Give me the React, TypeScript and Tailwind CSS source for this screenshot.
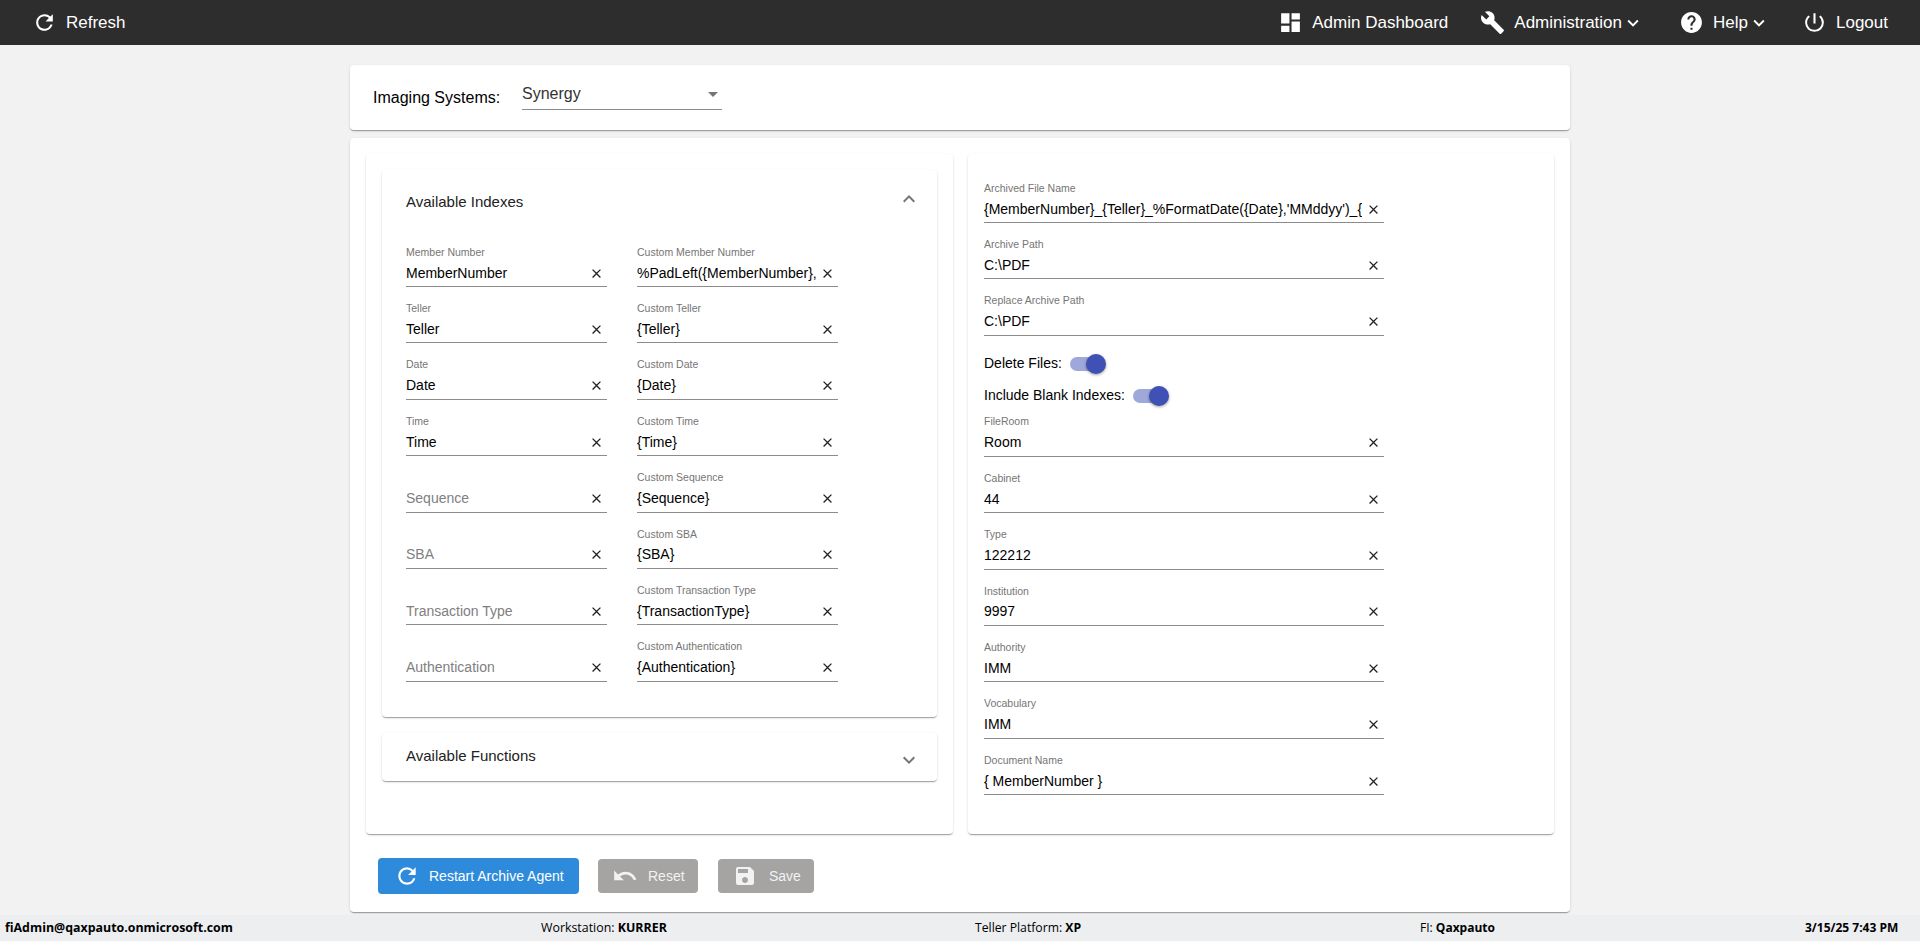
import {
  MdRefresh,
  MdDashboard,
  MdBuild,
  MdHelp,
  MdPowerSettingsNew,
  MdKeyboardArrowDown,
  MdExpandLess,
  MdExpandMore,
  MdClose,
  MdArrowDropDown,
  MdUndo,
  MdSave,
} from "react-icons/md";

const cardShadow = "shadow-[0_2px_1px_-1px_rgba(0,0,0,0.2),0_1px_1px_0_rgba(0,0,0,0.14),0_1px_3px_0_rgba(0,0,0,0.12)]";

const indexes = [
  { label: "Member Number", value: "MemberNumber", customLabel: "Custom Member Number", customValue: "%PadLeft({MemberNumber}," },
  { label: "Teller", value: "Teller", customLabel: "Custom Teller", customValue: "{Teller}" },
  { label: "Date", value: "Date", customLabel: "Custom Date", customValue: "{Date}" },
  { label: "Time", value: "Time", customLabel: "Custom Time", customValue: "{Time}" },
  { placeholder: "Sequence", customLabel: "Custom Sequence", customValue: "{Sequence}" },
  { placeholder: "SBA", customLabel: "Custom SBA", customValue: "{SBA}" },
  { placeholder: "Transaction Type", customLabel: "Custom Transaction Type", customValue: "{TransactionType}" },
  { placeholder: "Authentication", customLabel: "Custom Authentication", customValue: "{Authentication}" },
];

const archiveFields = [
  { label: "Archived File Name", value: "{MemberNumber}_{Teller}_%FormatDate({Date},'MMddyy')_{" },
  { label: "Archive Path", value: "C:\\PDF" },
  { label: "Replace Archive Path", value: "C:\\PDF" },
];

const metaFields = [
  { label: "FileRoom", value: "Room" },
  { label: "Cabinet", value: "44" },
  { label: "Type", value: "122212" },
  { label: "Institution", value: "9997" },
  { label: "Authority", value: "IMM" },
  { label: "Vocabulary", value: "IMM" },
  { label: "Document Name", value: "{ MemberNumber }" },
];

interface FieldProps {
  label?: string;
  value?: string;
  placeholder?: string;
}

function Field({ label, value, placeholder }: FieldProps) {
  return (
    <div className="h-[46px] border-b border-[#8c8c8c]">
      <div className="h-[23px] flex items-center text-[10.5px] text-[#757575]">{label}</div>
      <div className="h-[18px] flex items-center justify-between">
        <span className={`flex-1 overflow-hidden whitespace-nowrap text-[14px] ${value ? "text-black" : "text-[#808080]"}`}>
          {value || placeholder}
        </span>
        <MdClose size={15} className="ml-1 mr-[3px] shrink-0 text-[#222]" />
      </div>
    </div>
  );
}

function Toggle({ label }: { label: string }) {
  return (
    <div className="h-8 flex items-center text-[14px] text-black">
      <span className="mr-2">{label}</span>
      <div className="w-[34px] h-[14px] rounded-full bg-[#9fa8da] flex items-center">
        <div className="w-5 h-5 ml-4 shrink-0 rounded-full bg-[#3f51b5] shadow-[0_1px_3px_rgba(0,0,0,0.4)]" />
      </div>
    </div>
  );
}

function NavItem({ icon, label, chevron, className }: { icon: React.ReactNode; label: string; chevron?: boolean; className?: string }) {
  return (
    <div className={`flex items-center ${className ?? ""}`}>
      {icon}
      {label}
      {chevron && <MdKeyboardArrowDown size={22} className="-mr-[3px]" />}
    </div>
  );
}

export default function App() {
  return (
    <div className="h-screen w-screen flex flex-col bg-[#f2f2f2] overflow-hidden font-['Liberation_Sans',Arial,sans-serif]">
      {/* Top bar */}
      <div className="h-[45px] shrink-0 flex items-center justify-between bg-[#2d2d2d] text-white text-[17px] pl-8 pr-8">
        <NavItem icon={<MdRefresh size={25} className="mr-[9px]" />} label="Refresh" />
        <div className="flex items-center">
          <NavItem icon={<MdDashboard size={25} className="mr-[9px]" />} label="Admin Dashboard" />
          <NavItem icon={<MdBuild size={25} className="mr-[9px]" />} label="Administration" chevron className="ml-8" />
          <NavItem icon={<MdHelp size={25} className="mr-[9px]" />} label="Help" chevron className="ml-[38px]" />
          <NavItem icon={<MdPowerSettingsNew size={25} className="mr-[9px]" />} label="Logout" className="ml-[35px]" />
        </div>
      </div>

      <div className="flex-1 w-[1220px] mx-auto pt-5">
        {/* Imaging system picker */}
        <div className={`h-[65px] bg-white rounded ${cardShadow} flex items-center pl-[23px]`}>
          <span className="w-[149px] text-[16px] text-black">Imaging Systems:</span>
          <div className="w-[200px] h-[30px] mt-[-6px] border-b border-[#8c8c8c] flex items-center justify-between text-[16px] text-[#333]">
            Synergy
            <MdArrowDropDown size={24} className="-mr-[3px] text-[#757575]" />
          </div>
        </div>

        <div className={`h-[774px] mt-2 bg-white rounded ${cardShadow} p-4`}>
          <div className="grid grid-cols-[587px_586px] gap-x-[15px]">
            {/* Left column */}
            <div className={`h-[680px] rounded ${cardShadow} p-4`}>
              <div className={`rounded ${cardShadow} px-6 pb-[35px]`}>
                <div className="h-16 mb-[7px] flex items-center justify-between text-[15px] text-[#222]">
                  Available Indexes
                  <MdExpandLess size={24} className="-mr-2 mb-[6px] text-[#757575]" />
                </div>
                <div className="grid grid-cols-[201px_201px] gap-x-[30px] gap-y-[10.4px]">
                  {indexes.map((row) => (
                    <div key={row.customLabel} className="contents">
                      <Field label={row.label} value={row.value} placeholder={row.placeholder} />
                      <Field label={row.customLabel} value={row.customValue} />
                    </div>
                  ))}
                </div>
              </div>
              <div className={`h-12 mt-4 rounded ${cardShadow} px-6 flex items-center justify-between text-[15px] text-[#222]`}>
                Available Functions
                <MdExpandMore size={24} className="-mr-2 mt-[6px] text-[#757575]" />
              </div>
            </div>

            {/* Right column */}
            <div className={`h-[680px] rounded ${cardShadow} px-4 pt-[23px]`}>
              <div className="w-[400px] flex flex-col gap-y-[10.4px]">
                {archiveFields.map((f) => (
                  <Field key={f.label} label={f.label} value={f.value} />
                ))}
              </div>
              <div className="mt-3 w-[400px]">
                <Toggle label="Delete Files:" />
                <Toggle label="Include Blank Indexes:" />
              </div>
              <div className="w-[400px] -mt-px flex flex-col gap-y-[10.4px]">
                {metaFields.map((f) => (
                  <Field key={f.label} label={f.label} value={f.value} />
                ))}
              </div>
            </div>
          </div>

          {/* Actions */}
          <div className="mt-6 ml-3 flex items-center text-[14px] text-white">
            <button className="w-[201px] h-9 rounded bg-[#2e8bdb] flex items-center pl-4">
              <MdRefresh size={26} className="mr-[9px]" />
              Restart Archive Agent
            </button>
            <button className="w-[100px] h-[34px] ml-[19px] rounded bg-[#a5a4a3] text-[#f2f2f2] flex items-center pl-[14px]">
              <MdUndo size={26} className="mr-[10px]" />
              Reset
            </button>
            <button className="w-[96px] h-[34px] ml-5 rounded bg-[#a5a4a3] text-[#f2f2f2] flex items-center pl-[15px]">
              <MdSave size={24} className="mr-3" />
              Save
            </button>
          </div>
        </div>
      </div>

      {/* Status bar */}
      <div className="h-[26px] shrink-0 flex items-center bg-[#eceef0] text-[12px] text-black font-['Open_Sans',sans-serif] pl-[5px]">
        <b className="w-[536px] text-[12.4px]">fiAdmin@qaxpauto.onmicrosoft.com</b>
        <span className="w-[434px] text-[12.4px]">Workstation: <b>KURRER</b></span>
        <span className="w-[445px] text-[12.2px]">Teller Platform: <b>XP</b></span>
        <span className="w-[385px]">FI: <b>Qaxpauto</b></span>
        <b>3/15/25 7:43 PM</b>
      </div>
    </div>
  );
}
